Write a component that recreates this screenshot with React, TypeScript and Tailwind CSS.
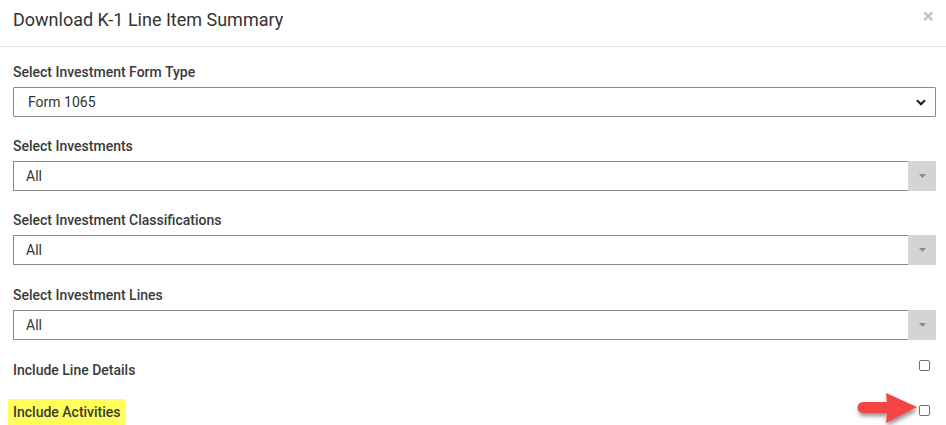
import React from "react";

function Caret() {
  return (
    <div className="w-[28px] h-full bg-[#d4d4d4] flex items-center justify-center">
      <svg width="7" height="4" viewBox="0 0 7 4">
        <path d="M0 0 L7 0 L3.5 4 Z" fill="#8a8a8a" />
      </svg>
    </div>
  );
}

function ComboSelect({ value }: { value: string }) {
  return (
    <div className="flex h-[30px]">
      <div className="flex-1 border-t border-b border-l border-[#8a8a8a] flex items-center pl-[12px] text-[14px] text-[#333]">
        {value}
      </div>
      <Caret />
    </div>
  );
}

function Label({ children }: { children: React.ReactNode }) {
  return (
    <div className="text-[14px] leading-[20px] font-medium text-[#3a3a3a] mb-[5px]">{children}</div>
  );
}

function Checkbox() {
  return <div className="w-[11px] h-[11px] border border-[#6f6f6f] rounded-[2px] bg-white" />;
}

export default function App() {
  return (
    <div
      className="relative w-[946px] h-[425px] bg-white overflow-hidden"
      style={{ fontFamily: "Roboto, 'Liberation Sans', sans-serif" }}
    >
      <div className="h-[47px] border-b border-[#e5e5e5] flex justify-between pl-[13px] pr-[12px] pt-[8px]">
        <div className="text-[18px] leading-[24px] text-[#333]">Download K-1 Line Item Summary</div>
        <div className="text-[21px] leading-[14px] font-bold text-[#c4c4c4] mt-[1px]">×</div>
      </div>
      <div className="pl-[13px] pr-[10px] pt-[15px]">
        <div className="mb-[19px]">
          <Label>Select Investment Form Type</Label>
          <div className="h-[30px] border border-[#8a8a8a] rounded-[1px] flex items-center justify-between pl-[14px] pr-[9px] text-[14px] text-[#333]">
            <span>Form 1065</span>
            <svg width="10" height="7" viewBox="0 0 10 7">
              <path d="M1 1.2 L5 5.2 L9 1.2" stroke="#222" strokeWidth="2.2" fill="none" />
            </svg>
          </div>
        </div>
        <div className="mb-[19px]">
          <Label>Select Investments</Label>
          <ComboSelect value="All" />
        </div>
        <div className="mb-[20px]">
          <Label>Select Investment Classifications</Label>
          <ComboSelect value="All" />
        </div>
        <div className="mb-[20px]">
          <Label>Select Investment Lines</Label>
          <ComboSelect value="All" />
        </div>
        <div className="flex justify-between items-start">
          <div className="text-[14px] leading-[20px] font-medium text-[#3a3a3a]">Include Line Details</div>
          <div className="mr-[6px]">
            <Checkbox />
          </div>
        </div>
        <div className="flex justify-between items-center mt-[19px]">
          <div className="-ml-[5px] bg-[#ffff5c] h-[27px] px-[5px] flex items-center text-[14px] font-medium text-[#3a3a3a]">
            Include Activities
          </div>
          <div className="mr-[6px] -mt-[4px]">
            <Checkbox />
          </div>
        </div>
      </div>
      <svg
        className="absolute left-[852px] top-[388px]"
        width="72"
        height="40"
        viewBox="0 0 72 40"
      >
        <defs>
          <filter id="sh" x="-20%" y="-20%" width="140%" height="160%">
            <feDropShadow dx="1" dy="3" stdDeviation="2" floodColor="#000" floodOpacity="0.45" />
          </filter>
        </defs>
        <path
          d="M11 14 L35 14 L34 5 L65 19 L34 35 L35 25 L11 25 A5.5 5.5 0 0 1 11 14 Z"
          fill="#f44444"
          filter="url(#sh)"
        />
      </svg>
    </div>
  );
}
